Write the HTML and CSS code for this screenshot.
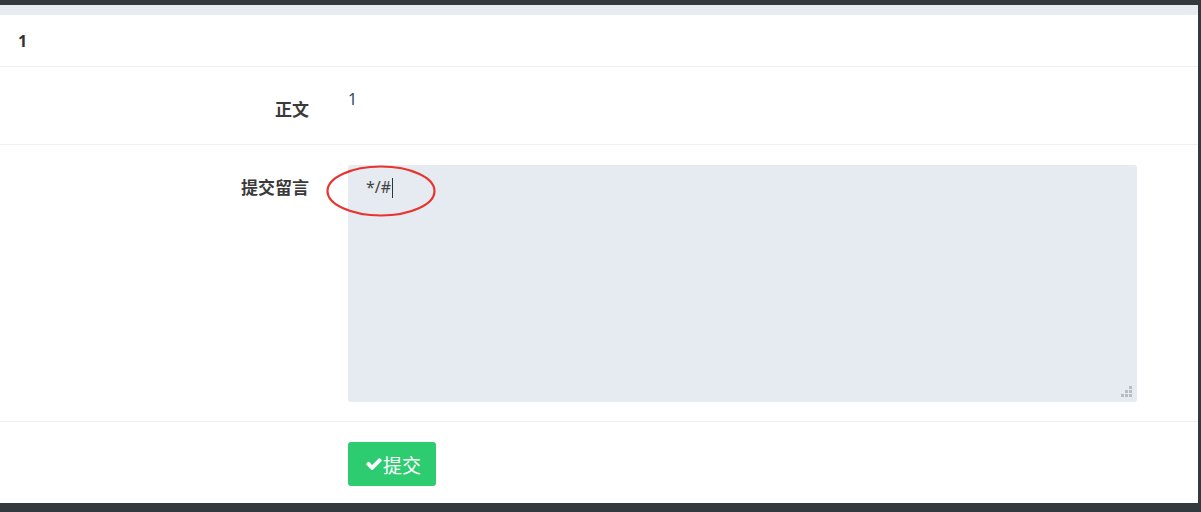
FILE: index.html
```html
<!DOCTYPE html>
<html>
  <head>
    <meta charset="utf-8" />
    <title>留言</title>
    <link rel="stylesheet" href="styles.css">
  </head>
  <body>
    <div class="frame">
      <div class="strip"></div>
      <div class="panel">
        <div class="panel-title">1</div>
        <form class="form" action="#" method="post">
          <div class="row">
            <label class="label">正文</label>
            <div class="value">1</div>
          </div>
          <div class="row tall">
            <label class="label" for="msg">提交留言</label>
            <div class="value">
              <div class="editor">
                <textarea id="msg" name="msg">*/#</textarea>
                <span class="caret"></span>
                <svg class="grip" width="13" height="12" viewBox="0 0 13 12">
                  <rect x="9" y="0" width="3" height="3" />
                  <rect x="5" y="4" width="3" height="3" />
                  <rect x="9" y="4" width="3" height="3" />
                  <rect x="1" y="8" width="3" height="3" />
                  <rect x="5" y="8" width="3" height="3" />
                  <rect x="9" y="8" width="3" height="3" />
                </svg>
                <svg class="mark" width="112" height="54" viewBox="0 0 112 54">
                  <ellipse cx="55" cy="26" rx="53.5" ry="24.5" />
                </svg>
              </div>
            </div>
          </div>
          <div class="row last">
            <div class="label"></div>
            <div class="value">
              <button type="submit" class="btn">
                <svg class="check" width="16" height="13" viewBox="100 380 1600 1170">
                  <path d="M1671 566q0 40-28 68l-724 724-136 136q-28 28-68 28t-68-28l-136-136-362-362q-28-28-28-68t28-68l136-136q28-28 68-28t68 28l294 295 656-657q28-28 68-28t68 28l136 136q28 28 28 68z" />
                </svg>提交
              </button>
            </div>
          </div>
        </form>
      </div>
    </div>
  </body>
</html>
```

FILE: styles.css
```css
* {
  box-sizing: border-box;
}
body {
  margin: 0;
  background: #34393e;
  font-family: 'Noto Sans', 'Noto Sans CJK SC', sans-serif;
  color: #333;
}
.frame {
  margin: 5px 3px 0 0;
  height: 498px;
  background: #fff;
}
.strip {
  height: 10px;
  background: #e8ebef;
}
.panel-title {
  padding: 16px 18px 15px;
  font-size: 16px;
  line-height: 20px;
  font-weight: 700;
  border-bottom: 1px solid #edf0f5;
}
.row {
  display: grid;
  grid-template-columns: 329px 789px;
  column-gap: 19px;
  padding: 20px 0 21px;
  border-bottom: 1px solid #edf0f5;
  min-height: 78px;
}
.row.tall {
  padding-bottom: 19px;
}
.row.last {
  border-bottom: 0;
  padding-bottom: 0;
}
.label {
  text-align: right;
  padding-right: 20px;
  padding-top: 8px;
  font-family: 'Noto Sans CJK SC', sans-serif;
  font-size: 17px;
  line-height: 28px;
  font-weight: 700;
  color: #3a3a3a;
}
.value {
  font-size: 16px;
  line-height: 20px;
  color: #34495e;
  padding-top: 2px;
}
.row.tall .value,
.row.last .value {
  padding-top: 0;
}
.editor {
  position: relative;
  height: 237px;
}
textarea {
  display: block;
  width: 100%;
  height: 100%;
  resize: none;
  border: 0;
  border-radius: 3px;
  background: #e6eaf1;
  padding: 10px 18px;
  font-family: 'Noto Sans', sans-serif;
  font-size: 16px;
  line-height: 24px;
  color: #444;
  outline: none;
}
.caret {
  position: absolute;
  left: 44px;
  top: 13px;
  width: 1px;
  height: 20px;
  background: #333;
}
.grip {
  position: absolute;
  right: 4px;
  bottom: 4px;
  fill: #b9bcc0;
}
.mark {
  position: absolute;
  left: -22px;
  top: 0;
  fill: none;
  stroke: #e8332f;
  stroke-width: 2.2;
}
.btn {
  display: inline-flex;
  align-items: center;
  gap: 1px;
  height: 44px;
  padding: 0 15px 0 18px;
  border: 0;
  border-radius: 3px;
  background: #2ecc71;
  color: #fff;
  font-family: 'Noto Sans CJK SC', sans-serif;
  font-size: 19px;
  cursor: pointer;
}
.check {
  fill: #fff;
}
```
